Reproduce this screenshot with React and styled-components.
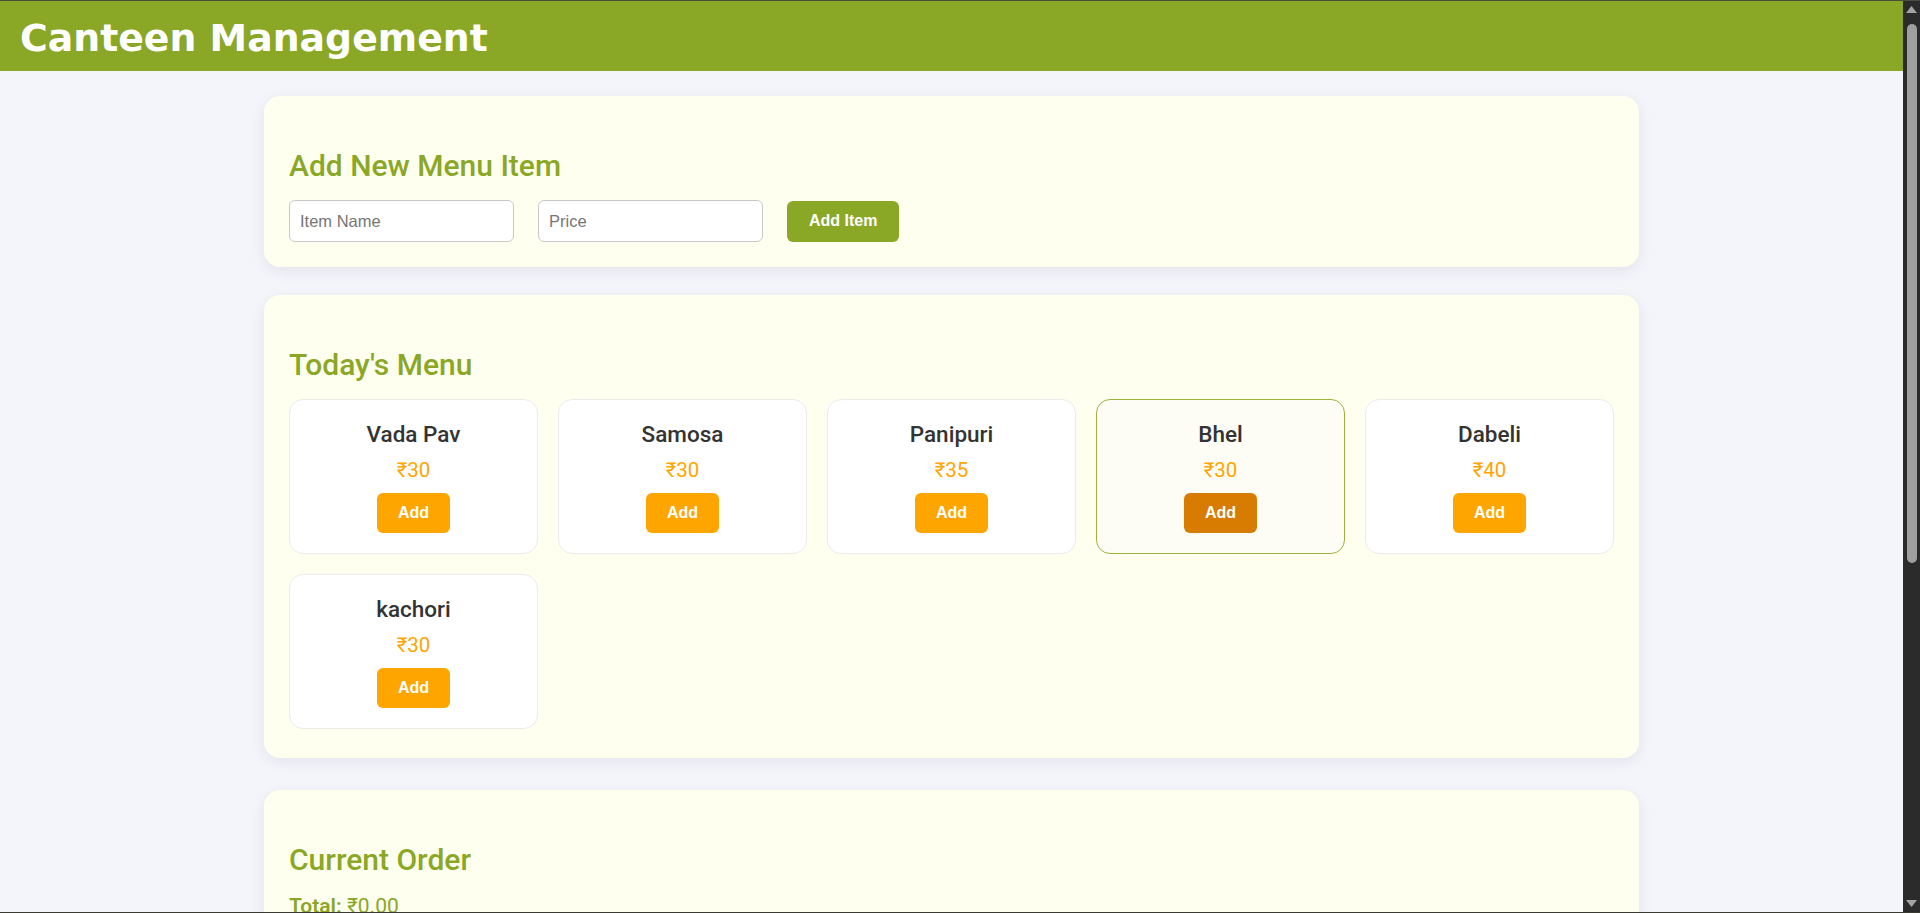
import React, { useState } from 'react';
import styled, { createGlobalStyle } from 'styled-components';

const GlobalStyle = createGlobalStyle`
  html, body {
    height: 100%;
  }
  body {
    margin: 0;
    overflow: hidden;
    background: #f4f5fa;
    font-family: Roboto, "Liberation Sans", Arial, sans-serif;
    color: #333;
  }
`;

const Page = styled.div`
  display: flex;
  height: 100vh;
  box-sizing: border-box;
  border-top: 1px solid #4d4b3c;
  border-bottom: 1px solid #3a3a32;
  background: #f4f5fa;
`;

const Scroller = styled.div`
  flex: 1;
  min-width: 0;
  overflow-y: auto;
  scrollbar-width: none;
`;

// dark window scrollbar seen at the right edge of the screenshot
const ScrollRail = styled.div`
  width: 17px;
  flex-shrink: 0;
  display: flex;
  flex-direction: column;
  align-items: center;
  background: #2b2b2b;
`;

const RailArrow = styled.div`
  height: 17px;
  display: flex;
  align-items: center;
  justify-content: center;
  margin-top: ${p => (p.$bottom ? 'auto' : '0')};
`;

const RailThumb = styled.div`
  width: 10px;
  height: 539px;
  margin-top: 6px;
  border-radius: 5px;
  background: #9f9f9f;
`;

const Header = styled.header`
  background: #8ba726;
  padding: 15px 20px 11px;
`;

const Title = styled.h1`
  margin: 0;
  color: #ffffff;
  font-family: "DejaVu Sans", Verdana, sans-serif;
  font-weight: bold;
  font-size: 37.8px;
  line-height: normal;
`;

const Main = styled.main`
  max-width: 1375px;
  margin: 0 auto;
  padding: 25px 0 40px;
  display: flex;
  flex-direction: column;
  gap: 28px;
`;

const Section = styled.section`
  background: #fffff0;
  border-radius: 16px;
  padding: 25px;
  margin-top: ${p => (p.$extraGap ? '4px' : '0')};
  box-shadow: 0 4px 14px rgba(40, 40, 90, 0.08);
`;

const SectionTitle = styled.h2`
  margin: 27px 0 17px;
  color: #8ba726;
  font-size: 30px;
  font-weight: 500;
  line-height: normal;
`;

const FormRow = styled.div`
  display: flex;
  align-items: center;
  gap: 24px;
`;

const TextInput = styled.input`
  box-sizing: border-box;
  width: 225px;
  height: 42px;
  padding: 0 10px;
  border: 1px solid #c8c8c8;
  border-radius: 6px;
  background: #ffffff;
  color: #333;
  font-family: "Liberation Sans", Arial, sans-serif;
  font-size: 16.5px;

  &::placeholder {
    color: #767676;
  }

  &:focus {
    outline: none;
    border-color: #8ba726;
  }
`;

const PrimaryButton = styled.button`
  height: 41px;
  padding: 0 22px;
  border: none;
  border-radius: 6px;
  background: #8ba726;
  color: #ffffff;
  font-family: "Liberation Sans", Arial, sans-serif;
  font-weight: bold;
  font-size: 16px;
  cursor: pointer;
`;

const MenuGrid = styled.div`
  display: grid;
  grid-template-columns: repeat(5, 1fr);
  gap: 20px;
  padding-bottom: 4px;
`;

const AddButton = styled.button`
  height: 40px;
  padding: 0 21px;
  border: none;
  border-radius: 6px;
  background: ${p => (p.$active ? '#d77c00' : '#ffa500')};
  color: #ffffff;
  font-family: "Liberation Sans", Arial, sans-serif;
  font-weight: bold;
  font-size: 16px;
  cursor: pointer;
`;

const MenuCard = styled.div`
  display: flex;
  flex-direction: column;
  align-items: center;
  padding: 21px 15px 20px;
  background: ${p => (p.$active ? '#fdfdf6' : '#ffffff')};
  border: 1px solid ${p => (p.$active ? '#9bb43e' : '#ebebeb')};
  border-radius: 14px;

  &:hover {
    background: #fdfdf6;
    border-color: #9bb43e;
  }

  &:hover ${AddButton} {
    background: #d77c00;
  }
`;

const ItemName = styled.h3`
  margin: 0;
  font-size: 22.5px;
  font-weight: 500;
  line-height: normal;
  color: #333;
`;

const ItemPrice = styled.p`
  margin: 11px 0 11px;
  font-size: 20.5px;
  line-height: normal;
  color: #ffa500;
`;

const TotalLine = styled.p`
  margin: 4px 0 20px;
  font-size: 21px;
  color: #8ba726;

  strong {
    font-weight: 600;
  }
`;

const EmptyNote = styled.p`
  margin: 0 0 10px;
  font-size: 17px;
  color: #777;
`;

const initialMenu = [
  { name: 'Vada Pav', price: 30 },
  { name: 'Samosa', price: 30 },
  { name: 'Panipuri', price: 35 },
  { name: 'Bhel', price: 30 },
  { name: 'Dabeli', price: 40 },
  { name: 'kachori', price: 30 },
];

const Arrow = ({ down }) => (
  <svg width="11" height="9" viewBox="0 0 11 9">
    <path d={down ? 'M0 1 L11 1 L5.5 8 Z' : 'M5.5 1 L11 8 L0 8 Z'} fill="#a3a3a3" />
  </svg>
);

export default function App() {
  const [menu, setMenu] = useState(initialMenu);
  const [name, setName] = useState('');
  const [price, setPrice] = useState('');
  const [order, setOrder] = useState([]);

  const addItem = () => {
    if (!name || !price) return;
    setMenu([...menu, { name, price: Number(price) }]);
    setName('');
    setPrice('');
  };

  const total = order.reduce((sum, item) => sum + item.price, 0);

  return (
    <Page>
      <GlobalStyle />
      <Scroller>
        <Header>
          <Title>Canteen Management</Title>
        </Header>
        <Main>
          <Section>
            <SectionTitle>Add New Menu Item</SectionTitle>
            <FormRow>
              <TextInput placeholder="Item Name" value={name} onChange={e => setName(e.target.value)} />
              <TextInput placeholder="Price" value={price} onChange={e => setPrice(e.target.value)} />
              <PrimaryButton onClick={addItem}>Add Item</PrimaryButton>
            </FormRow>
          </Section>

          <Section>
            <SectionTitle>Today's Menu</SectionTitle>
            <MenuGrid>
              {menu.map(item => (
                <MenuCard key={item.name} $active={item.name === 'Bhel'}>
                  <ItemName>{item.name}</ItemName>
                  <ItemPrice>₹{item.price}</ItemPrice>
                  <AddButton $active={item.name === 'Bhel'} onClick={() => setOrder([...order, item])}>
                    Add
                  </AddButton>
                </MenuCard>
              ))}
            </MenuGrid>
          </Section>

          <Section $extraGap>
            <SectionTitle>Current Order</SectionTitle>
            <TotalLine>
              <strong>Total:</strong> ₹{total.toFixed(2)}
            </TotalLine>
            <EmptyNote>No items added yet.</EmptyNote>
            <PrimaryButton>Place Order</PrimaryButton>
          </Section>

          <Section>
            <SectionTitle>Order History</SectionTitle>
            <EmptyNote>No orders placed yet.</EmptyNote>
          </Section>
        </Main>
      </Scroller>
      <ScrollRail>
        <RailArrow><Arrow /></RailArrow>
        <RailThumb />
        <RailArrow $bottom><Arrow down /></RailArrow>
      </ScrollRail>
    </Page>
  );
}
